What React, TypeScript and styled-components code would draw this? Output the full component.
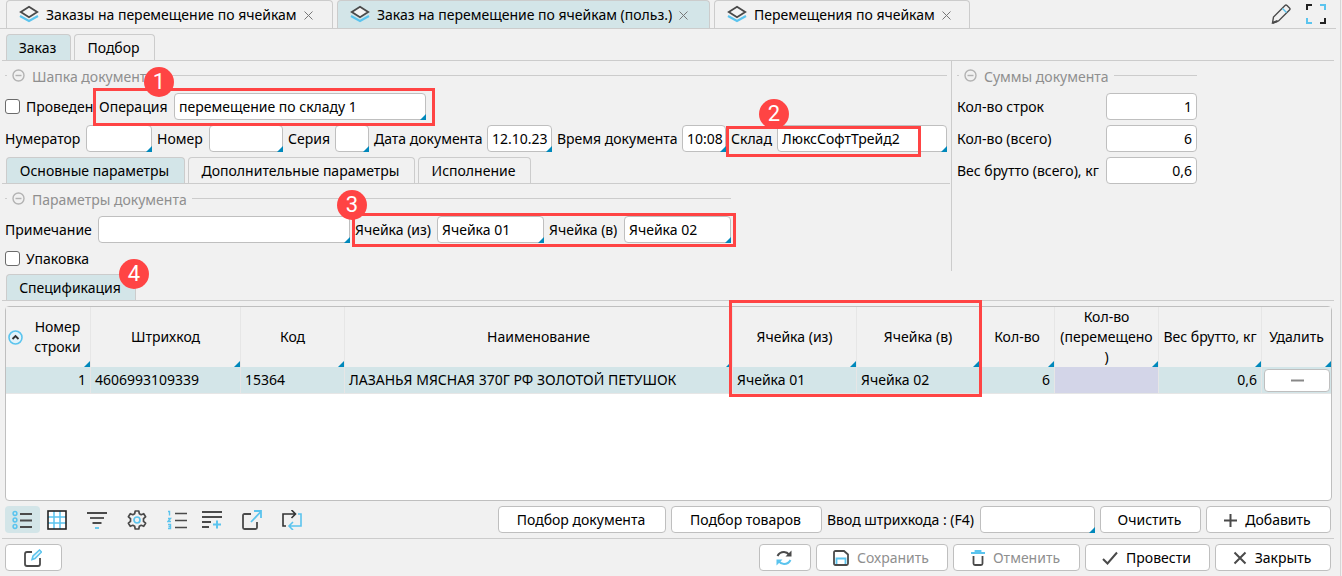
import React, { useId } from "react";
import type { ReactNode } from "react";
import styled, { createGlobalStyle, css } from "styled-components";

const color = {
  page: "#f1f1f1",
  line: "#cccccc",
  field: "#bfbfbf",
  active: "#d3e5e8",
  accent: "#0088bb",
  sky: "#5bc4ee",
  ink: "#4a4a4a",
  muted: "#8f8f8f",
  mark: "#ff4444",
};

const GlobalStyle = createGlobalStyle`
  *, *::before, *::after { box-sizing: border-box; }
  body {
    margin: 0;
    background: ${color.page};
    color: #000;
    font-family: "Noto Sans", "Open Sans", sans-serif;
    font-size: 14px;
    line-height: 20px;
  }
  button, input { font: inherit; color: inherit; }
  svg { flex: none; }
`;

const Page = styled.main`
  display: flex;
  flex-direction: column;
  min-height: 100vh;
  margin-right: 1px;
  padding-bottom: 5px;
  border-right: 1px solid #d6d6d6;
`;

const WindowBar = styled.header`
  display: flex;
  align-items: flex-end;
  height: 29px;
  margin-right: 4px;
  padding: 0 10px 0 6px;
  border-bottom: 1px solid ${color.line};
`;

const WindowTabs = styled.nav`
  display: flex;
  gap: 4px;
  flex: 1;
`;

const WindowTab = styled.div<{ $active?: boolean; $width: number }>`
  display: flex;
  align-items: center;
  gap: 7px;
  width: ${(p) => p.$width}px;
  height: 28px;
  padding: 1px 0 0 12px;
  border: 1px solid ${color.line};
  border-bottom: 0;
  border-radius: 4px 4px 0 0;
  background: ${(p) => (p.$active ? color.active : color.page)};
  white-space: nowrap;
`;

const BareButton = styled.button`
  display: flex;
  align-items: center;
  justify-content: center;
  padding: 0;
  border: 0;
  background: none;
`;

const WindowActions = styled.div`
  display: flex;
  gap: 15px;
  padding-bottom: 4px;
`;

const TabRow = styled.div`
  display: flex;
  gap: 3px;
  height: 27px;
  padding-left: 4px;
  border-bottom: 1px solid ${color.line};
`;

const Tab = styled.button<{ $active?: boolean; $width: number }>`
  width: ${(p) => p.$width}px;
  padding: 1px 2px 0 0;
  border: 1px solid ${color.line};
  border-bottom: 0;
  border-radius: 4px 4px 0 0;
  background: ${(p) => (p.$active ? color.active : color.page)};
  white-space: nowrap;
`;

const Section = styled.section`
  margin: 5px 6px 0 2px;
`;

const SpecSection = styled(Section)`
  margin-top: 3px;
`;

const Columns = styled.div`
  display: flex;
  margin: 0 6px 0 2px;
`;

const DocumentPane = styled.div`
  flex: 1;
  min-width: 0;
  border-right: 1px solid ${color.line};
`;

const InnerTabRow = styled(TabRow)`
  margin: 5px 1px 0 0;
`;

const TotalsPane = styled.div`
  flex: 0 0 382px;
  padding-left: 5px;
`;

const Group = styled.section<{ $fit?: boolean }>`
  display: flex;
  flex-direction: column;
  gap: 5px;
  width: ${(p) => (p.$fit ? "fit-content" : "auto")};
  padding: 0 4px 0 3px;
`;

const TotalsGroup = styled(Group)`
  width: 240px;
  padding: 0;
`;

const GroupHeading = styled.h2`
  display: flex;
  align-items: center;
  gap: 5px;
  height: 27px;
  margin: 0;
  padding-top: 1px;
  color: ${color.muted};
  font-size: 14px;
  font-weight: 400;
  white-space: nowrap;

  &::before,
  &::after {
    content: "";
    height: 1px;
    background: ${color.line};
  }
  &::before {
    width: 2px;
  }
  &::after {
    flex: 1;
  }
  span {
    padding: 3px 0 0 2px;
  }
`;

const FieldRow = styled.div`
  display: flex;
  align-items: center;
  gap: 5px;
  height: 27px;
`;

const CheckLabel = styled.label<{ $width?: number }>`
  display: flex;
  align-items: center;
  gap: 6px;
  width: ${(p) => (p.$width ? `${p.$width}px` : "auto")};
  white-space: nowrap;

  input {
    flex: none;
    appearance: none;
    width: 15px;
    height: 15px;
    margin: 0;
    border: 1px solid #6b6b6b;
    border-radius: 3px;
    background: #fff;
  }
`;

const CheckRow = styled.div`
  display: flex;
  height: 23px;
  padding-bottom: 2px;
`;

const FieldBox = styled.span<{ $grow?: boolean }>`
  display: flex;
  align-items: center;
  flex: ${(p) => (p.$grow ? "1" : "none")};
  min-width: 0;
`;

const FieldLabel = styled.label<{ $width: number }>`
  flex: none;
  width: ${(p) => p.$width}px;
  white-space: nowrap;
`;

const cornerMark = css`
  &::after {
    content: "";
    position: absolute;
    right: 0;
    bottom: 0;
    width: 6px;
    height: 6px;
    background: ${color.accent};
    clip-path: polygon(100% 0, 100% 100%, 0 100%);
  }
`;

const InputShell = styled.span<{ $width?: number; $marked?: boolean }>`
  position: relative;
  display: block;
  width: ${(p) => (p.$width ? `${p.$width}px` : "auto")};
  flex: ${(p) => (p.$width ? "none" : "1")};
  height: 27px;
  ${(p) => p.$marked && cornerMark}
`;

const TextInput = styled.input<{ $right?: boolean }>`
  display: block;
  width: 100%;
  height: 27px;
  padding: ${(p) => (p.$right ? "0 4px" : "0 1px 0 4px")};
  border: 1px solid ${color.field};
  border-radius: 4px;
  background: #fff;
  text-align: ${(p) => (p.$right ? "right" : "left")};
`;

const Marked = styled.div<{ $grow?: boolean }>`
  position: relative;
  display: flex;
  gap: 5px;
  flex: ${(p) => (p.$grow ? "1" : "none")};
`;

const Frame = styled.span<{ $left: number; $top: number; $width: number; $height: number }>`
  position: absolute;
  z-index: 2;
  left: ${(p) => p.$left}px;
  top: ${(p) => p.$top}px;
  width: ${(p) => p.$width}px;
  height: ${(p) => p.$height}px;
  border: 3px solid ${color.mark};
  pointer-events: none;
`;

const Badge = styled.span<{ $left: number; $top: number }>`
  position: absolute;
  z-index: 3;
  left: ${(p) => p.$left}px;
  top: ${(p) => p.$top}px;
  width: 30px;
  height: 30px;
  border-radius: 50%;
  background: ${color.mark};
  color: #fff;
  font: 22px/30px Roboto, sans-serif;
  text-align: center;
`;

const GridBox = styled.div`
  flex: 1;
  min-height: 195px;
  margin: 5px 8px 0 5px;
  border: 1px solid ${color.field};
  border-radius: 4px;
  background: #fff;
`;

const Grid = styled.table`
  width: 100%;
  table-layout: fixed;
  border-collapse: separate;
  border-spacing: 0;
`;

const HeadCell = styled.th<{ $last?: boolean }>`
  position: relative;
  height: 60px;
  padding: 0 4px;
  border-right: ${(p) => (p.$last ? "0" : "1px solid #e6e6e6")};
  background: ${color.page};
  font-weight: 400;
  line-height: 20px;
  text-align: center;
  overflow-wrap: anywhere;
  ${cornerMark}
`;

const HeadInner = styled.span`
  display: flex;
  align-items: center;
  margin-left: -2px;

  span {
    flex: 1;
    padding-left: 6px;
  }
`;

const BodyCell = styled.td<{ $right?: boolean; $tone?: string }>`
  height: 27px;
  padding: 0 4px;
  border-right: 1px solid #e6e6e6;
  border-bottom: 1px solid #e6e6e6;
  background: ${(p) => p.$tone ?? color.active};
  text-align: ${(p) => (p.$right ? "right" : "left")};
  white-space: nowrap;
`;

const ActionCell = styled(BodyCell)`
  padding: 0 1px 0 2px;
  border-right: 0;
`;

const Button = styled.button<{ $width: number }>`
  display: flex;
  align-items: center;
  justify-content: center;
  gap: 8px;
  flex: none;
  width: ${(p) => p.$width}px;
  height: 27px;
  padding: 1px 2px 0 0;
  border: 1px solid ${color.field};
  border-radius: 4px;
  background: #fff;
  white-space: nowrap;

  &:disabled {
    color: ${color.muted};
  }
`;

const RemoveButton = styled.button`
  display: flex;
  align-items: center;
  justify-content: center;
  width: 100%;
  height: 23px;
  padding: 0;
  border: 1px solid ${color.field};
  border-radius: 4px;
  background: #fff;
`;

const Toolbar = styled.div`
  display: flex;
  align-items: center;
  gap: 5px;
  margin: 0 6px 0 2px;
  padding: 5px 3px;
`;

const Footer = styled(Toolbar)`
  border-top: 1px solid ${color.line};
`;

const IconGroup = styled.div`
  display: flex;
`;

const IconButton = styled(BareButton)<{ $active?: boolean }>`
  width: 35px;
  height: 27px;
  padding-right: 2px;
  border-radius: 4px;
  background: ${(p) => (p.$active ? color.active : "transparent")};
`;

const Spacer = styled.span`
  flex: 1;
`;

type IconProps = { w?: number; h?: number; children: ReactNode; stroke?: string; sw?: number };

function Icon({ w = 20, h = 20, children, stroke = color.ink, sw = 2 }: IconProps) {
  return (
    <svg width={w} height={h} viewBox={`0 0 ${w} ${h}`} fill="none" stroke={stroke} strokeWidth={sw} aria-hidden="true">
      {children}
    </svg>
  );
}

const LayersIcon = () => (
  <Icon h={20}>
    <path d="M1 11 10 16l9-5" stroke={color.sky} strokeWidth="2.2" />
    <path d="M10 1.800 18.200 7 10 12.200 1.800 7z" fill="#f4f4f4" strokeWidth="1.8" />
  </Icon>
);

const CloseIcon = () => (
  <Icon w={9} h={9} stroke="#777" sw={1}>
    <path d="M.5.5l8 8M8.5.5l-8 8" />
  </Icon>
);

const PencilIcon = () => (
  <Icon sw={1.4}>
    <path d="M1.5 19 2.5 13 14 1.5q1-1 2 0L18.500 4q1 1 0 2L7.500 17z" />
    <path d="M11.5 4.5l4 4" stroke={color.sky} />
    <path d="M1.5 19l5-2" strokeWidth="2" />
  </Icon>
);

const ExpandIcon = () => (
  <Icon stroke="#222">
    <path d="M1 6V1h5M19 14v5h-5" />
    <path d="M14 1h5v5M6 19H1v-5" stroke={color.sky} />
  </Icon>
);

const CollapseIcon = () => (
  <Icon w={13} h={13} stroke="#b3b3b3" sw={1.4}>
    <circle cx="6.5" cy="6.5" r="5.5" />
    <path d="M3.500 6.500h6" />
  </Icon>
);

const UpIcon = () => (
  <Icon w={15} h={15} stroke={color.sky} sw={1.6}>
    <circle cx="7.5" cy="7.5" r="6.5" fill="#e3f3fa" />
    <path d="M4.500 9l3-3 3 3" stroke="#333" strokeWidth="1.8" />
  </Icon>
);

const ListIcon = () => (
  <Icon sw={1.8}>
    <path d="M8 4h12M8 10.500h12M8 17h12" />
    <g stroke={color.sky} strokeWidth="1.5">
      <circle cx="3" cy="3.5" r="1.9" />
      <circle cx="3" cy="10" r="1.9" />
      <circle cx="3" cy="16.5" r="1.9" />
    </g>
  </Icon>
);

const GridIcon = () => (
  <Icon>
    <rect x="1" y="1" width="18" height="18" fill="#fff" stroke="none" />
    <path d="M7 1v18M13 1v18M1 7h18M1 13h18" stroke={color.sky} strokeWidth="1.5" />
    <rect x="1" y="1" width="18" height="18" stroke="#222" strokeWidth="1.6" />
  </Icon>
);

const FilterIcon = () => (
  <Icon sw={1.8}>
    <path d="M0 3h20M5.500 13h9" />
    <path d="M3 8h14" />
    <path d="M8 18h4" stroke={color.sky} />
  </Icon>
);

const GearIcon = () => (
  <Icon sw={1.7}>
    <path
      d="M8.200 1h3.600l.5 2.700 1.900 1 2.500-1 1.900 3.100-2.100 1.800v2.800l2.100 1.800-1.900 3.100-2.500-1-1.900 1-.5 2.700H8.200l-.5-2.700-1.900-1-2.500 1-1.900-3.100 2.100-1.800V8.600L1.400 6.800l1.900-3.100 2.500 1 1.900-1z"
      strokeLinejoin="round"
    />
    <circle cx="10" cy="10" r="3" stroke={color.sky} />
  </Icon>
);

const NumberedIcon = () => (
  <Icon sw={1.7}>
    <path d="M8 3.500h12M8 10.500h12M8 17.500h12" />
    <path d="M1 1.500h1.500v4M1 8.500h2.500L1 11.500h3M1 14.500h2.500v4H1M1.500 16.500h2" stroke={color.sky} strokeWidth="1.4" />
  </Icon>
);

const AddRowsIcon = () => (
  <Icon>
    <path d="M0 2h20M0 7h20M0 12h9M0 17h7" strokeWidth="1.8" />
    <path d="M11 14.500h8M15 10.500v8" stroke={color.sky} />
  </Icon>
);

const ExternalIcon = () => (
  <Icon>
    <path d="M9 4H2.500Q1 4 1 5.500v12Q1 19 2.500 19h11q1.500 0 1.500-1.500V12" strokeWidth="1.8" />
    <path d="M9 12 19 1.500M12 1h7v7" stroke={color.sky} strokeWidth="1.8" />
  </Icon>
);

const SwapIcon = () => (
  <Icon sw={1.6}>
    <path d="M4 16H1V4h12M9.500 0l4 4-4 4" stroke="#333" />
    <path d="M16 4h3v12H7.500M11 12l-4 4 4 4" stroke={color.sky} />
  </Icon>
);

const EditIcon = () => (
  <Icon w={18} h={19}>
    <path d="M8 3H3Q1 3 1 5v10q0 2 2 2h11q2 0 2-2V9" strokeWidth="1.8" />
    <path d="M8 10.500 9 7l6.500-6 2 2L11 9.500z" stroke={color.sky} strokeWidth="1.5" fill="#dff3fb" />
  </Icon>
);

const RefreshIcon = () => (
  <Icon w={16} h={16}>
    <path d="M1.500 6Q3.500 2 8 2q3 0 5.500 3" />
    <path d="M15.500.5V6.500h-6z" fill={color.ink} stroke="none" />
    <path d="M14.500 10q-2 4-6.500 4-3 0-5.500-3" stroke={color.sky} />
    <path d="M.5 15.500v-6h6z" fill={color.sky} stroke="none" />
  </Icon>
);

const SaveIcon = () => (
  <Icon w={16} h={16} sw={1.8}>
    <path d="M2.500 1H11l4 3.500v9q0 1.500-1.500 1.500h-11Q1 15 1 13.500v-11Q1 1 2.500 1z" />
    <path d="M3.500 14V8.500h9V14" stroke={color.sky} />
  </Icon>
);

const TrashIcon = () => (
  <Icon w={14} h={16} sw={1.8}>
    <path d="M2.500 6v7.500Q2.500 15 4 15h6q1.500 0 1.500-1.500V6" />
    <path d="M0 3h14M4.500 2.500V1h5v1.500" stroke={color.sky} />
  </Icon>
);

const CheckIcon = () => (
  <Icon w={16} h={14}>
    <path d="M1 8l4.500 4.500L15 1.500" />
  </Icon>
);

const CrossIcon = () => (
  <Icon w={14} h={14}>
    <path d="M1.500 1.500l11 11M12.500 1.500l-11 11" />
  </Icon>
);

const PlusIcon = () => (
  <Icon w={13} h={13}>
    <path d="M6.500 0v13M0 6.500h13" />
  </Icon>
);

const MinusIcon = () => (
  <Icon w={13} h={3} stroke="#888">
    <path d="M0 1.500h13" />
  </Icon>
);

function GroupTitle({ children }: { children: ReactNode }) {
  return (
    <GroupHeading>
      <CollapseIcon />
      <span>{children}</span>
    </GroupHeading>
  );
}

type FieldProps = {
  label: string;
  labelWidth: number;
  width?: number;
  value?: string;
  right?: boolean;
  marked?: boolean;
};

function Field({ label, labelWidth, width, value = "", right, marked = true }: FieldProps) {
  const id = useId();
  return (
    <FieldBox $grow={!width}>
      <FieldLabel htmlFor={id} $width={labelWidth}>{label}</FieldLabel>
      <InputShell $width={width} $marked={marked}>
        <TextInput id={id} defaultValue={value} $right={right} />
      </InputShell>
    </FieldBox>
  );
}

const windows = [
  { title: "Заказы на перемещение по ячейкам", width: 327 },
  { title: "Заказ на перемещение по ячейкам (польз.)", width: 373, active: true },
  { title: "Перемещения по ячейкам", width: 256 },
];

const toolGroups = [
  [
    { name: "Список", icon: <ListIcon />, active: true },
    { name: "Таблица", icon: <GridIcon /> },
  ],
  [{ name: "Фильтр", icon: <FilterIcon /> }],
  [{ name: "Настройки", icon: <GearIcon /> }],
  [
    { name: "Нумерация", icon: <NumberedIcon /> },
    { name: "Добавить строки", icon: <AddRowsIcon /> },
  ],
  [{ name: "Экспорт", icon: <ExternalIcon /> }],
  [{ name: "Обновление", icon: <SwapIcon /> }],
];

const columnWidths = [85, 150, 104, undefined, 124, 123, 75, 104, 103, 69];

export default function App() {
  return (
    <>
      <GlobalStyle />
      <Page>
        <WindowBar>
          <WindowTabs>
            {windows.map((w) => (
              <WindowTab key={w.title} $active={w.active} $width={w.width}>
                <LayersIcon />
                {w.title}
                <BareButton aria-label="Закрыть вкладку"><CloseIcon /></BareButton>
              </WindowTab>
            ))}
          </WindowTabs>
          <WindowActions>
            <BareButton aria-label="Редактировать"><PencilIcon /></BareButton>
            <BareButton aria-label="На весь экран"><ExpandIcon /></BareButton>
          </WindowActions>
        </WindowBar>

        <Section>
          <TabRow>
            <Tab $active $width={65}>Заказ</Tab>
            <Tab $width={81}>Подбор</Tab>
          </TabRow>
        </Section>

        <Columns>
          <DocumentPane>
            <Group>
              <GroupTitle>Шапка документа</GroupTitle>
              <FieldRow>
                <CheckLabel $width={89}><input type="checkbox" />Проведен</CheckLabel>
                <Marked>
                  <Field label="Операция" labelWidth={75} width={252} value="перемещение по складу 1" />
                  <Frame $left={-6} $top={-5} $width={342} $height={38} />
                  <Badge $left={45} $top={-26}>1</Badge>
                </Marked>
              </FieldRow>
              <FieldRow>
                <Field label="Нумератор" labelWidth={81} width={66} />
                <Field label="Номер" labelWidth={52} width={74} />
                <Field label="Серия" labelWidth={47} width={34} />
                <Field label="Дата документа" labelWidth={113} width={65} value="12.10.23" />
                <Field label="Время документа" labelWidth={125} width={44} value="10:08" />
                <Marked $grow>
                  <Field label="Склад" labelWidth={46} value="ЛюксСофтТрейд2" />
                  <Frame $left={-5} $top={1} $width={195} $height={31} />
                  <Badge $left={28} $top={-26}>2</Badge>
                </Marked>
              </FieldRow>
            </Group>
            <InnerTabRow>
              <Tab $active $width={179}>Основные параметры</Tab>
              <Tab $width={227}>Дополнительные параметры</Tab>
              <Tab $width={113}>Исполнение</Tab>
            </InnerTabRow>
            <Group $fit>
              <GroupTitle>Параметры документа</GroupTitle>
              <FieldRow>
                <Field label="Примечание" labelWidth={93} width={252} />
                <Marked>
                  <Field label="Ячейка (из)" labelWidth={82} width={107} value="Ячейка 01" />
                  <Field label="Ячейка (в)" labelWidth={75} width={107} value="Ячейка 02" />
                  <Frame $left={-3} $top={-3} $width={384} $height={34} />
                  <Badge $left={-18} $top={-26}>3</Badge>
                </Marked>
              </FieldRow>
              <CheckRow>
                <CheckLabel><input type="checkbox" />Упаковка</CheckLabel>
              </CheckRow>
            </Group>
          </DocumentPane>
          <TotalsPane>
            <TotalsGroup>
              <GroupTitle>Суммы документа</GroupTitle>
              <Field label="Кол-во строк" labelWidth={149} width={91} value="1" right marked={false} />
              <Field label="Кол-во (всего)" labelWidth={149} width={91} value="6" right marked={false} />
              <Field label="Вес брутто (всего), кг" labelWidth={149} width={91} value="0,6" right marked={false} />
            </TotalsGroup>
          </TotalsPane>
        </Columns>

        <SpecSection>
          <TabRow>
            <Marked>
              <Tab $active $width={130}>Спецификация</Tab>
              <Badge $left={113} $top={-15}>4</Badge>
            </Marked>
          </TabRow>
        </SpecSection>

        <GridBox>
          <Grid>
            <colgroup>
              {columnWidths.map((w, i) => <col key={i} width={w} />)}
            </colgroup>
            <thead>
              <tr>
                <HeadCell><HeadInner><UpIcon /><span>Номер строки</span></HeadInner></HeadCell>
                <HeadCell>Штрихкод</HeadCell>
                <HeadCell>Код</HeadCell>
                <HeadCell>Наименование</HeadCell>
                <HeadCell>
                  Ячейка (из)
                  <Frame $left={-4} $top={-7} $width={253} $height={97} />
                </HeadCell>
                <HeadCell>Ячейка (в)</HeadCell>
                <HeadCell>Кол-во</HeadCell>
                <HeadCell>Кол-во (перемещено)</HeadCell>
                <HeadCell>Вес брутто, кг</HeadCell>
                <HeadCell $last>Удалить</HeadCell>
              </tr>
            </thead>
            <tbody>
              <tr>
                <BodyCell $right>1</BodyCell>
                <BodyCell>4606993109339</BodyCell>
                <BodyCell>15364</BodyCell>
                <BodyCell>ЛАЗАНЬЯ МЯСНАЯ 370Г РФ ЗОЛОТОЙ ПЕТУШОК</BodyCell>
                <BodyCell>Ячейка 01</BodyCell>
                <BodyCell>Ячейка 02</BodyCell>
                <BodyCell $right>6</BodyCell>
                <BodyCell $tone="#d3d5e8" />
                <BodyCell $right>0,6</BodyCell>
                <ActionCell><RemoveButton aria-label="Удалить"><MinusIcon /></RemoveButton></ActionCell>
              </tr>
            </tbody>
          </Grid>
        </GridBox>

        <Toolbar>
          {toolGroups.map((group) => (
            <IconGroup key={group[0].name}>
              {group.map((t) => (
                <IconButton key={t.name} aria-label={t.name} $active={"active" in t}>{t.icon}</IconButton>
              ))}
            </IconGroup>
          ))}
          <Spacer />
          <Button $width={168}>Подбор документа</Button>
          <Button $width={151}>Подбор товаров</Button>
          <Field label="Ввод штрихкода : (F4)" labelWidth={153} width={115} />
          <Button $width={101}>Очистить</Button>
          <Button $width={125}><PlusIcon />Добавить</Button>
        </Toolbar>

        <Footer>
          <Button $width={57} aria-label="Изменить"><EditIcon /></Button>
          <Spacer />
          <Button $width={52} aria-label="Обновить"><RefreshIcon /></Button>
          <Button $width={132} disabled><SaveIcon />Сохранить</Button>
          <Button $width={127} disabled><TrashIcon />Отменить</Button>
          <Button $width={125}><CheckIcon />Провести</Button>
          <Button $width={116}><CrossIcon />Закрыть</Button>
        </Footer>
      </Page>
    </>
  );
}
